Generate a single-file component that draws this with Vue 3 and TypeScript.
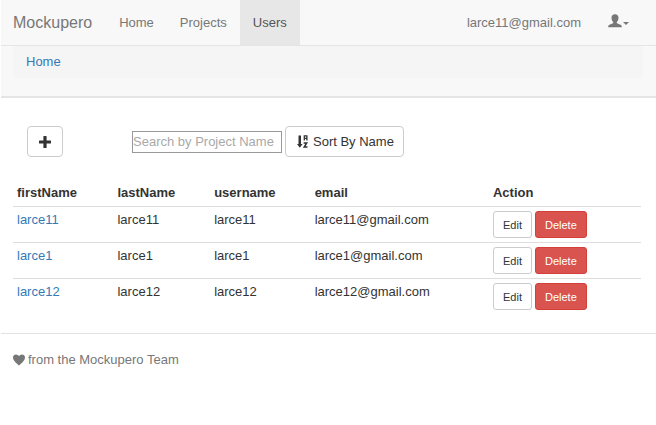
<script setup lang="ts">
import { computed, ref } from 'vue'

interface User {
  firstName: string
  lastName: string
  username: string
  email: string
}

const query = ref('')
const ascending = ref(false)
const users = ref<User[]>(
  ['larce11', 'larce1', 'larce12'].map((name) => ({
    firstName: name,
    lastName: name,
    username: name,
    email: `${name}@gmail.com`,
  })),
)

const visibleUsers = computed(() => {
  const found = users.value.filter((u) => u.username.includes(query.value))
  return ascending.value
    ? [...found].sort((a, b) => a.username.localeCompare(b.username))
    : found
})

function remove(user: User) {
  users.value = users.value.filter((u) => u !== user)
}
</script>

<template>
  <div class="page">
    <header class="top">
      <nav class="navbar">
        <a class="brand" href="#">Mockupero</a>
        <a class="nav-link" href="#">Home</a>
        <a class="nav-link" href="#">Projects</a>
        <a class="nav-link active" href="#" aria-current="page">Users</a>
        <a class="nav-link account" href="#">larce11@gmail.com</a>
        <button class="nav-link user-menu" type="button" aria-label="Account menu">
          <svg width="14" height="14" viewBox="0 0 14 14" aria-hidden="true">
            <path d="M7 0.3C4.8 0.3 3.5 1.7 3.5 3.7C3.5 5.5 4.2 7 5.2 7.9V9C4.6 9.8 2.2 10.3 1 11.1C0.4 11.6 0.2 12.2 0.2 13.2H13.8C13.8 12.2 13.6 11.6 13 11.1C11.8 10.3 9.4 9.8 8.8 9V7.9C9.8 7 10.5 5.5 10.5 3.7C10.5 1.7 9.2 0.3 7 0.3Z" />
          </svg>
          <span class="caret"></span>
        </button>
      </nav>
      <div class="breadcrumb"><a href="#">Home</a></div>
    </header>

    <main>
      <div class="toolbar">
        <button class="btn add" type="button" aria-label="Add user">
          <svg width="12" height="12" viewBox="0 0 12 12" aria-hidden="true">
            <path d="M4.9 0H7.1Q7.6 0 7.6 0.5V4.4H11.5Q12 4.4 12 4.9V7.1Q12 7.6 11.5 7.6H7.6V11.5Q7.6 12 7.1 12H4.9Q4.4 12 4.4 11.5V7.6H0.5Q0 7.6 0 7.1V4.9Q0 4.4 0.5 4.4H4.4V0.5Q4.4 0 4.9 0Z" />
          </svg>
        </button>
        <input v-model="query" class="search" type="text" placeholder="Search by Project Name" aria-label="Search by Project Name" />
        <button class="btn sort" type="button" @click="ascending = !ascending">
          <svg width="12" height="14" viewBox="0 0 12 14" aria-hidden="true">
            <path d="M1.5 0.5H4V9H5.6L2.8 12.8L0 9H1.5Z" />
            <path d="M7.3 5.4V0.9H9.9V5.4M7.3 3.4H9.9" fill="none" stroke="currentColor" stroke-width="1.3" />
            <path d="M6.6 8H9.7L7.2 12H10.5" fill="none" stroke="currentColor" stroke-width="1.5" />
          </svg>
          Sort By Name
        </button>
      </div>

      <table>
        <colgroup>
          <col class="col-first" />
          <col class="col-last" />
          <col class="col-user" />
          <col class="col-email" />
          <col />
        </colgroup>
        <thead>
          <tr>
            <th scope="col">firstName</th>
            <th scope="col">lastName</th>
            <th scope="col">username</th>
            <th scope="col">email</th>
            <th scope="col">Action</th>
          </tr>
        </thead>
        <tbody>
          <tr v-for="user in visibleUsers" :key="user.username">
            <td><a href="#">{{ user.firstName }}</a></td>
            <td>{{ user.lastName }}</td>
            <td>{{ user.username }}</td>
            <td>{{ user.email }}</td>
            <td>
              <div class="actions">
                <button class="btn small" type="button">Edit</button>
                <button class="btn small danger" type="button" @click="remove(user)">Delete</button>
              </div>
            </td>
          </tr>
        </tbody>
      </table>
    </main>

    <footer>
      <svg width="12" height="12" viewBox="0 0 12 12" aria-hidden="true">
        <path d="M6 11.5C4.5 9.8 0 6.8 0 3.4C0 1.5 1.4 0.4 3 0.4C4.3 0.4 5.4 1.1 6 2.3C6.6 1.1 7.7 0.4 9 0.4C10.6 0.4 12 1.5 12 3.4C12 6.8 7.5 9.8 6 11.5Z" />
      </svg>
      from the Mockupero Team
    </footer>
  </div>
</template>

<style>
body {
  background: #fff;
}
</style>

<style scoped>
.page {
  padding-left: 1px;
  font: 13px/18px "Liberation Sans", Arial, sans-serif;
  color: #333;
}

.page * {
  box-sizing: border-box;
}

a {
  color: #337ab7;
  text-decoration: none;
}

svg {
  flex: none;
  fill: currentColor;
}

button,
input {
  font: inherit;
}

.top {
  padding-bottom: 18px;
  background: #f8f8f8;
  border-bottom: 2px solid #e5e5e5;
}

.navbar {
  display: flex;
  height: 46px;
  padding-right: 14px;
  border-bottom: 1px solid #e5e5e5;
}

.brand,
.nav-link {
  display: flex;
  align-items: center;
  padding: 0 13px;
  color: #777;
}

.brand {
  padding: 0 14px 0 12px;
  font-size: 16px;
}

.active {
  background: #e7e7e7;
  color: #555;
}

.account {
  margin-left: auto;
}

.user-menu {
  gap: 1px;
  padding-left: 14px;
  padding-bottom: 4px;
  border: 0;
  background: none;
}

.caret {
  margin-top: 6px;
  border: 3px solid transparent;
  border-top-color: currentColor;
  border-bottom: 0;
}

.breadcrumb {
  margin: 0 13px 0 12px;
  padding: 7px 13px;
  background: #f5f5f5;
  border-radius: 0 0 4px 4px;
}

.toolbar {
  display: flex;
  align-items: center;
  gap: 3px;
  padding: 28px 26px 0;
}

.btn {
  display: flex;
  align-items: center;
  justify-content: center;
  gap: 4px;
  height: 31px;
  padding: 0 11px;
  border: 1px solid #ccc;
  border-radius: 4px;
  background: #fff;
  color: #333;
}

.sort {
  padding-right: 9px;
}

.add {
  width: 36px;
  margin-right: 66px;
}

.search {
  width: 150px;
  height: 22px;
  padding: 0;
  border: 1px solid #999;
  border-radius: 0;
  color: #333;
}

.search::placeholder {
  color: #a9a9a9;
}

main {
  padding-bottom: 19px;
}

table {
  width: calc(100% - 27px);
  margin: 22px 15px 0 12px;
  border-collapse: collapse;
  table-layout: fixed;
}

.col-first {
  width: 16%;
}

.col-last {
  width: 15.4%;
}

.col-user {
  width: 16%;
}

.col-email {
  width: 28.4%;
}

th,
td {
  padding: 4px;
  text-align: left;
  vertical-align: top;
}

th {
  padding-top: 5px;
}

td {
  border-top: 1px solid #ddd;
}

.actions {
  display: flex;
  gap: 3px;
}

.small {
  height: 27px;
  padding: 0 9px;
  border-radius: 3px;
  font-size: 11px;
}

.danger {
  border-color: #d43f3a;
  background: #d9534f;
  color: #fff;
}

footer {
  display: flex;
  align-items: center;
  gap: 3px;
  padding: 17px 12px;
  border-top: 1px solid #e1e1e1;
  color: #777;
}
</style>
